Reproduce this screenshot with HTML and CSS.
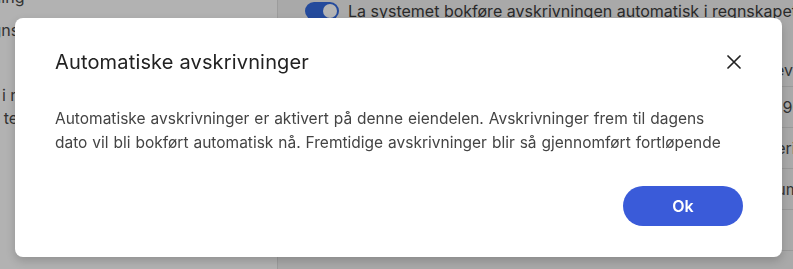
FILE: index.html
```html
<!DOCTYPE html>
<html lang="no">
<head>
<meta charset="utf-8">
<title>Automatiske avskrivninger</title>
<link rel="stylesheet" href="styles.css">
</head>
<body>
<div class="page">
  <aside class="left">
    <div class="l-row l-top">Avregning</div>
    <div class="l-row l-a">Regns</div>
    <div class="l-row l-b">Bokført i r</div>
    <div class="l-row l-c">Dato te</div>
  </aside>
  <main class="right">
    <div class="toggle-row">
      <span class="toggle"><span class="knob"></span></span>
      <span class="toggle-label">La systemet bokføre avskrivningen automatisk i regnskapet</span>
    </div>
    <div class="table">
      <div class="t-row t-head"><span>Levetid</span></div>
      <div class="t-row"><span>1990</span></div>
      <div class="t-row t-head"><span>Periode</span></div>
      <div class="t-row"><span>Sum</span></div>
      <div class="t-row"><span></span></div>
    </div>
  </main>
</div>

<div class="overlay">
  <div class="modal" role="dialog">
    <div class="modal-head">
      <h2 class="modal-title">Automatiske avskrivninger</h2>
      <button class="close" aria-label="Lukk">
        <svg width="14" height="14" viewBox="0 0 14 14"><path d="M1 1 L13 13 M13 1 L1 13" stroke="#222" stroke-width="1.7" stroke-linecap="round" fill="none"/></svg>
      </button>
    </div>
    <p class="modal-body">Automatiske avskrivninger er aktivert på denne eiendelen. Avskrivninger frem til dagens dato vil bli bokført automatisk nå. Fremtidige avskrivninger blir så gjennomført fortløpende</p>
    <div class="modal-foot">
      <button class="ok">Ok</button>
    </div>
  </div>
</div>
</body>
</html>
```

FILE: styles.css
```css
html, body {
  margin: 0;
  padding: 0;
  width: 793px;
  height: 269px;
  overflow: hidden;
  font-family: Inter, "Noto Sans", "Liberation Sans", sans-serif;
}

.page {
  display: flex;
  height: 269px;
  background: #a9a9a9;
}

.left {
  width: 277px;
  flex: none;
  background: #b2b2b2;
  border-right: 1px solid #9c9c9c;
  display: flex;
  flex-direction: column;
  font-size: 16px;
  color: #333;
  overflow: hidden;
}

.l-row {
  white-space: nowrap;
  line-height: 22px;
}
.l-top { margin-top: -14px; text-indent: -52px; }
.l-a { margin-top: 11px; text-indent: -28px; }
.l-b { margin-top: 43px; text-indent: -58px; }
.l-c { margin-top: 1px; text-indent: -36px; }

.right {
  flex: 1;
  padding-left: 27px;
  overflow: hidden;
}

.toggle-row {
  display: flex;
  align-items: center;
  gap: 9px;
  height: 22px;
}

.toggle {
  width: 34px;
  height: 18px;
  border-radius: 9px;
  background: #244a9c;
  display: flex;
  justify-content: flex-end;
  align-items: center;
  padding: 0 2px;
  box-sizing: border-box;
  flex: none;
}
.knob {
  width: 14px;
  height: 14px;
  border-radius: 50%;
  background: #b4b4b4;
}

.toggle-label {
  font-size: 16px;
  color: #2a2a2a;
  white-space: nowrap;
}

.table {
  margin-left: 475px;
  margin-top: 32px;
  font-size: 16px;
  color: #333;
}
.t-row {
  height: 40px;
  border-bottom: 1px solid #999;
  display: flex;
  align-items: center;
  white-space: nowrap;
  text-indent: -14px;
}
.t-row:nth-child(1) { height: 32px; }

.overlay {
  position: fixed;
  inset: 0;
}

.modal {
  position: absolute;
  left: 15px;
  top: 18px;
  width: 767px;
  box-sizing: border-box;
  background: #fff;
  border-radius: 8px;
  padding: 28px 39px 31px 40px;
  box-shadow: 0 4px 10px rgba(0, 0, 0, 0.18);
}

.modal-head {
  display: flex;
  align-items: center;
  justify-content: space-between;
  height: 32px;
}

.modal-title {
  margin: 0;
  font-size: 20px;
  font-weight: 400;
  color: #222;
  letter-spacing: 0.16px;
}

.close {
  border: 0;
  background: none;
  padding: 0;
  margin-right: 2px;
  width: 14px;
  height: 14px;
  display: flex;
  cursor: pointer;
}

.modal-body {
  margin: 29px 0 0;
  font-size: 15.5px;
  line-height: 24px;
  word-spacing: 0.6px;
  color: #444;
  max-width: 670px;
}

.modal-foot {
  display: flex;
  justify-content: flex-end;
  margin-top: 31px;
}

.ok {
  width: 120px;
  height: 40px;
  border: 0;
  border-radius: 20px;
  background: #3a5bd9;
  color: #fff;
  font-family: inherit;
  font-size: 16px;
  font-weight: 600;
  cursor: pointer;
}
```
